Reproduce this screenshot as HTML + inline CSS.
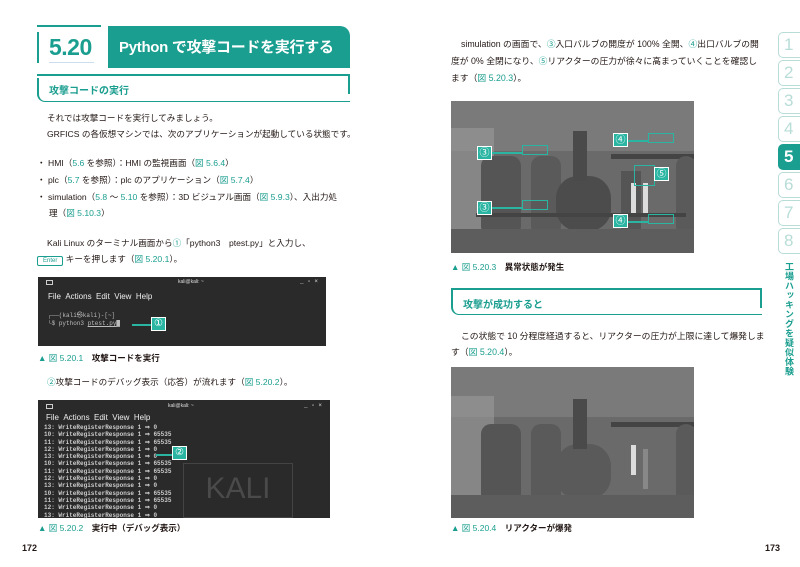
<!DOCTYPE html>
<html><head><meta charset="utf-8"><style>
*{margin:0;padding:0;box-sizing:border-box}
body{width:800px;height:567px;background:#fff;position:relative;overflow:hidden;font-family:"Liberation Sans","Noto Sans CJK JP",sans-serif;color:#231815}
.a{position:absolute;white-space:nowrap}
.t{font-size:8.6px;line-height:12px}
.tr{font-size:8.8px;line-height:12px}
.l{color:#1a9e8f}
.teal{background:#1a9e8f}
.term{position:absolute;background:#2a2a2a;color:#ddd;font-family:"Liberation Mono",monospace}
.cap{font-size:8.5px;font-weight:bold}
.cap b{color:#1a9e8f;font-weight:normal}
.tab{position:absolute;left:778px;width:24px;height:26px;border:1px solid #b8ddd7;border-right:none;border-radius:5px 0 0 5px;color:#b8ddd7;font-size:17px;line-height:24px;padding-left:5px}
.box{position:absolute;border:1.5px solid #2ab5a3}
.num{position:absolute;background:#2ab5a3;color:#fff;border:1px solid #fff;font-size:10px;width:15px;height:14px;text-align:center;line-height:13px}
.scene{position:absolute;background:#6a6a6a;overflow:hidden}
.scene div{position:absolute}
</style></head><body>
<!-- Title -->
<div class="a" style="left:37px;top:25px;width:64px;height:1.5px;background:#1a9e8f"></div>
<div class="a" style="left:37px;top:32px;width:2px;height:31px;background:#1a9e8f"></div>
<div class="a l" style="left:49px;top:31px;font-size:23px;font-weight:bold;line-height:32px;color:#1a9e8f;letter-spacing:-0.5px">5.20</div>
<div class="a" style="left:49px;top:62px;width:45px;height:1px;background:#cde"></div>
<div class="a teal" style="left:108px;top:26px;width:242px;height:42px;border-radius:0 10px 0 0"></div>
<div class="a" style="left:119px;top:37px;font-size:15px;font-weight:bold;color:#fff;line-height:22px;letter-spacing:-0.3px">Python で攻撃コードを実行する</div>
<!-- sub -->
<div class="a" style="left:37px;top:74px;width:313px;height:1.5px;background:#1a9e8f"></div>
<div class="a" style="left:37px;top:78px;width:313px;height:24px;border-left:2px solid #1a9e8f;border-bottom:1.5px solid #1a9e8f;border-radius:0 0 0 8px"></div>
<div class="a" style="left:348px;top:74px;width:2px;height:20px;background:#1a9e8f"></div>
<div class="a l" style="left:49px;top:82px;font-size:10px;font-weight:bold">攻撃コードの実行</div>
<div class="a t" style="left:47px;top:112px">それでは攻撃コードを実行してみましょう。</div>
<div class="a t" style="left:47px;top:128px">GRFICS の各仮想マシンでは、次のアプリケーションが起動している状態です。</div>
<div class="a t" style="left:37px;top:157px">・ HMI（<span class="l">5.6</span> を参照）：HMI の監視画面（<span class="l">図 5.6.4</span>）</div>
<div class="a t" style="left:37px;top:174px">・ plc（<span class="l">5.7</span> を参照）：plc のアプリケーション（<span class="l">図 5.7.4</span>）</div>
<div class="a t" style="left:37px;top:191px">・ simulation（<span class="l">5.8</span> ～ <span class="l">5.10</span> を参照）：3D ビジュアル画面（<span class="l">図 5.9.3</span>）、入出力処</div>
<div class="a t" style="left:49px;top:207px">理（<span class="l">図 5.10.3</span>）</div>
<div class="a t" style="left:47px;top:237px">Kali Linux のターミナル画面から<span class="l">①</span>「python3　ptest.py」と入力し、</div>
<div class="a t" style="left:37px;top:253px"><span style="display:inline-block;border:1px solid #1a9e8f;border-radius:2px;font-size:6px;padding:0 5px;line-height:8px;color:#1a9e8f">Enter</span> キーを押します（<span class="l">図 5.20.1</span>）。</div>
<!-- term1 -->
<div class="term" style="left:38px;top:277px;width:288px;height:69px">
<div class="a" style="left:8px;top:3px;width:7px;height:5px;border:1px solid #ccc"></div>
<div class="a" style="left:140px;top:2px;font-size:5px;font-family:'Liberation Sans'">kali@kali: ~</div>
<div class="a" style="left:262px;top:1px;font-size:6px">_ ▫ ×</div>
<div class="a" style="left:10px;top:15px;font-size:8px;font-family:'Liberation Sans';color:#eee">File &nbsp;Actions &nbsp;Edit &nbsp;View &nbsp;Help</div>
<div class="a" style="left:10px;top:35px;font-size:6px;line-height:8px;color:#bbb">┌──(kali㉿kali)-[~]<br>└$ python3 <u>ptest.py</u>█</div>
<div class="a" style="left:94px;top:47px;width:20px;height:1.5px;background:#2ab5a3"></div>
<div class="num" style="left:113px;top:40px">①</div>
</div>
<div class="a cap" style="left:38px;top:352px"><b>▲ 図 5.20.1</b>　攻撃コードを実行</div>
<div class="a t" style="left:47px;top:376px"><span class="l">②</span>攻撃コードのデバッグ表示（応答）が流れます（<span class="l">図 5.20.2</span>）。</div>
<!-- term2 -->
<div class="term" style="left:38px;top:400px;width:292px;height:118px">
<div class="a" style="left:8px;top:4px;width:7px;height:5px;border:1px solid #ccc"></div>
<div class="a" style="left:130px;top:3px;font-size:5px;font-family:'Liberation Sans'">kali@kali: ~</div>
<div class="a" style="left:266px;top:2px;font-size:6px">_ ▫ ×</div>
<div class="a" style="left:8px;top:13px;font-size:8px;font-family:'Liberation Sans';color:#eee">File &nbsp;Actions &nbsp;Edit &nbsp;View &nbsp;Help</div>
<div class="a" style="left:145px;top:63px;width:110px;height:55px;border:1px solid #444;color:#4a4a4a;font-size:30px;font-family:'Liberation Sans';text-align:center;line-height:50px">KALI</div>
<div class="a" style="left:6px;top:24px;font-size:6px;line-height:7.3px;color:#ccc;font-weight:bold">13: WriteRegisterResponse 1 ⇒ 0<br>10: WriteRegisterResponse 1 ⇒ 65535<br>11: WriteRegisterResponse 1 ⇒ 65535<br>12: WriteRegisterResponse 1 ⇒ 0<br>13: WriteRegisterResponse 1 ⇒ 0<br>10: WriteRegisterResponse 1 ⇒ 65535<br>11: WriteRegisterResponse 1 ⇒ 65535<br>12: WriteRegisterResponse 1 ⇒ 0<br>13: WriteRegisterResponse 1 ⇒ 0<br>10: WriteRegisterResponse 1 ⇒ 65535<br>11: WriteRegisterResponse 1 ⇒ 65535<br>12: WriteRegisterResponse 1 ⇒ 0<br>13: WriteRegisterResponse 1 ⇒ 0</div>
<div class="a" style="left:118px;top:54px;width:16px;height:1.5px;background:#2ab5a3"></div>
<div class="num" style="left:134px;top:46px">②</div>
</div>
<div class="a cap" style="left:38px;top:522px"><b>▲ 図 5.20.2</b>　実行中（デバッグ表示）</div>
<div class="a" style="left:22px;top:543px;font-size:9px;font-weight:bold">172</div>

<!-- right page -->
<div class="a tr" style="left:461px;top:38px">simulation の画面で、<span class="l">③</span>入口バルブの開度が 100% 全開、<span class="l">④</span>出口バルブの開</div>
<div class="a tr" style="left:451px;top:55px">度が 0% 全閉になり、<span class="l">⑤</span>リアクターの圧力が徐々に高まっていくことを確認し</div>
<div class="a tr" style="left:451px;top:72px">ます（<span class="l">図 5.20.3</span>）。</div>
<!-- scene1 -->
<div class="scene" style="left:451px;top:101px;width:243px;height:152px">
<div style="left:0;top:0;width:243px;height:50px;background:#7a7a7a"></div>
<div style="left:0;top:27px;width:43px;height:125px;background:#999;opacity:.6"></div>
<div style="left:30px;top:55px;width:40px;height:80px;background:#555;border-radius:10px"></div>
<div style="left:80px;top:55px;width:30px;height:80px;background:#5a5a5a;border-radius:10px"></div>
<div style="left:105px;top:75px;width:55px;height:55px;background:#4c4c4c;border-radius:40%"></div>
<div style="left:122px;top:30px;width:14px;height:50px;background:#4a4a4a"></div>
<div style="left:160px;top:53px;width:85px;height:5px;background:#444"></div>
<div style="left:170px;top:70px;width:20px;height:62px;background:#555"></div>
<div style="left:225px;top:55px;width:20px;height:80px;background:#5a5a5a;border-radius:10px"></div>
<div style="left:0;top:128px;width:243px;height:24px;background:#5d5d5d"></div>
<div style="left:25px;top:112px;width:210px;height:4px;background:#444"></div>
<div style="left:180px;top:82px;width:5px;height:30px;background:#ddd"></div>
<div style="left:192px;top:82px;width:5px;height:30px;background:#ddd"></div>
</div>
<div class="box" style="left:522px;top:145px;width:26px;height:10px"></div>
<div class="box" style="left:522px;top:200px;width:26px;height:10px"></div>
<div class="box" style="left:648px;top:133px;width:26px;height:10px"></div>
<div class="box" style="left:648px;top:214px;width:26px;height:10px"></div>
<div class="box" style="left:634px;top:165px;width:21px;height:21px"></div>
<div class="num" style="left:477px;top:146px">③</div>
<div class="num" style="left:477px;top:201px">③</div>
<div class="num" style="left:613px;top:133px">④</div>
<div class="num" style="left:613px;top:214px">④</div>
<div class="num" style="left:654px;top:167px">⑤</div>
<div class="a" style="left:492px;top:152px;width:30px;height:1.5px;background:#2ab5a3"></div>
<div class="a" style="left:492px;top:207px;width:30px;height:1.5px;background:#2ab5a3"></div>
<div class="a" style="left:628px;top:140px;width:20px;height:1.5px;background:#2ab5a3"></div>
<div class="a" style="left:628px;top:221px;width:20px;height:1.5px;background:#2ab5a3"></div>
<div class="a cap" style="left:451px;top:261px"><b>▲ 図 5.20.3</b>　異常状態が発生</div>
<!-- sub2 -->
<div class="a" style="left:451px;top:288px;width:311px;height:27px;border-left:2px solid #1a9e8f;border-bottom:1.5px solid #1a9e8f;border-radius:0 0 0 8px"></div>
<div class="a" style="left:451px;top:288px;width:311px;height:1.5px;background:#1a9e8f"></div>
<div class="a" style="left:760px;top:288px;width:2px;height:20px;background:#1a9e8f"></div>
<div class="a l" style="left:463px;top:296px;font-size:10px;font-weight:bold">攻撃が成功すると</div>
<div class="a tr" style="left:461px;top:330px">この状態で 10 分程度経過すると、リアクターの圧力が上限に達して爆発しま</div>
<div class="a tr" style="left:451px;top:346px">す（<span class="l">図 5.20.4</span>）。</div>
<!-- scene2 -->
<div class="scene" style="left:451px;top:367px;width:243px;height:151px">
<div style="left:0;top:0;width:243px;height:50px;background:#7a7a7a"></div>
<div style="left:0;top:29px;width:43px;height:122px;background:#999;opacity:.6"></div>
<div style="left:30px;top:57px;width:40px;height:80px;background:#555;border-radius:10px"></div>
<div style="left:80px;top:57px;width:30px;height:80px;background:#5a5a5a;border-radius:10px"></div>
<div style="left:105px;top:77px;width:55px;height:55px;background:#5a5a5a;border-radius:40%"></div>
<div style="left:122px;top:32px;width:14px;height:50px;background:#4a4a4a"></div>
<div style="left:160px;top:55px;width:85px;height:5px;background:#444"></div>
<div style="left:225px;top:57px;width:20px;height:80px;background:#5a5a5a;border-radius:10px"></div>
<div style="left:0;top:128px;width:243px;height:23px;background:#5d5d5d"></div>
<div style="left:180px;top:78px;width:5px;height:30px;background:#ddd"></div>
<div style="left:192px;top:82px;width:5px;height:40px;background:#888"></div>
</div>
<div class="a cap" style="left:451px;top:522px"><b>▲ 図 5.20.4</b>　リアクターが爆発</div>
<div class="a" style="left:765px;top:543px;font-size:9px;font-weight:bold">173</div>
<!-- tabs -->
<div class="tab" style="top:32px">1</div>
<div class="tab" style="top:60px">2</div>
<div class="tab" style="top:88px">3</div>
<div class="tab" style="top:116px">4</div>
<div class="tab" style="top:144px;background:#1a9e8f;border-color:#1a9e8f;color:#fff;font-weight:bold">5</div>
<div class="tab" style="top:172px">6</div>
<div class="tab" style="top:200px">7</div>
<div class="tab" style="top:228px">8</div>
<div class="a l" style="left:784px;top:262px;font-size:9px;font-weight:bold;writing-mode:vertical-rl;line-height:10px;letter-spacing:.5px">工場ハッキングを疑似体験</div>
</body></html>
